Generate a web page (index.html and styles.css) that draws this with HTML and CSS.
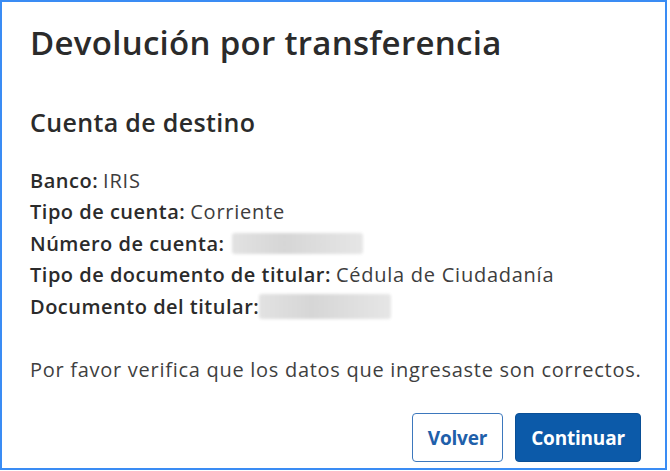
FILE: index.html
```html
<!DOCTYPE html>
<html lang="es">
<head>
<meta charset="utf-8">
<title>Devolución por transferencia</title>
<link rel="stylesheet" href="styles.css">
</head>
<body>
<div class="frame">
  <div class="dialog">
    <h1 class="title">Devolución por transferencia</h1>
    <h2 class="subtitle">Cuenta de destino</h2>
    <div class="details">
      <div class="row"><span class="label">Banco:</span> <span class="value">IRIS</span></div>
      <div class="row"><span class="label">Tipo de cuenta:</span> <span class="value">Corriente</span></div>
      <div class="row"><span class="label">Número de cuenta:</span> <span class="redacted redacted-account"></span></div>
      <div class="row"><span class="label">Tipo de documento de titular:</span> <span class="value">Cédula de Ciudadanía</span></div>
      <div class="row"><span class="label">Documento del titular:</span> <span class="redacted redacted-doc"></span></div>
    </div>
    <p class="note">Por favor verifica que los datos que ingresaste son correctos.</p>
    <div class="actions">
      <button class="btn btn-outline" type="button">Volver</button>
      <button class="btn btn-primary" type="button">Continuar</button>
    </div>
  </div>
</div>
</body>
</html>
```
FILE: styles.css
```css
html, body {
  margin: 0;
  padding: 0;
  background: #ffffff;
}
body {
  font-family: "Open Sans", "Lato", sans-serif;
  color: #2d2d2d;
}
.frame {
  width: 667px;
  height: 470px;
  box-sizing: border-box;
  border: 2px solid #3a8cf4;
  background: #ffffff;
}
.dialog {
  display: flex;
  flex-direction: column;
  padding: 21px 0 0 28px;
}
.title {
  margin: 0;
  font-size: 33px;
  line-height: 40px;
  font-weight: 600;
  color: #2b2b2b;
  letter-spacing: 0.3px;
}
.subtitle {
  margin: 44px 0 0;
  font-size: 25px;
  line-height: 30px;
  font-weight: 600;
  color: #2b2b2b;
  letter-spacing: 0.35px;
}
.details {
  margin-top: 27.6px;
  display: flex;
  flex-direction: column;
}
.row {
  display: flex;
  align-items: center;
  gap: 5px;
  font-size: 20px;
  line-height: 31.5px;
  letter-spacing: 0.5px;
  white-space: nowrap;
}
.label {
  font-weight: 600;
  color: #2b2b2b;
}
.value {
  font-weight: 400;
  color: #3d3d3d;
  letter-spacing: 0.75px;
}
.redacted {
  display: inline-block;
  height: 21px;
  background: linear-gradient(90deg, #e2e2e2, #d6d6d6 40%, #dedede 70%, #e6e6e6);
  border-radius: 3px;
  filter: blur(1.5px);
}
.redacted-account {
  width: 131px;
  margin-left: 2px;
}
.redacted-doc {
  width: 132px;
  height: 25px;
  margin-left: -5px;
}
.note {
  margin: 31.5px 0 0;
  font-size: 20px;
  line-height: 31.5px;
  letter-spacing: 0.72px;
  color: #3f3f3f;
}
.actions {
  display: flex;
  justify-content: flex-end;
  gap: 12px;
  margin-top: 28px;
  padding-right: 24px;
}
.btn {
  height: 49px;
  box-sizing: border-box;
  border-radius: 4px;
  font-family: "Open Sans", "Lato", sans-serif;
  font-size: 19px;
  font-weight: 700;
  letter-spacing: -0.2px;
  padding: 0;
  cursor: pointer;
}
.btn-outline {
  width: 91px;
  background: #ffffff;
  color: #1f60aa;
  border: 1.5px solid #3d78bd;
}
.btn-primary {
  width: 126px;
  background: #0c5aa9;
  color: #ffffff;
  border: 1px solid #0a4f96;
}
```
